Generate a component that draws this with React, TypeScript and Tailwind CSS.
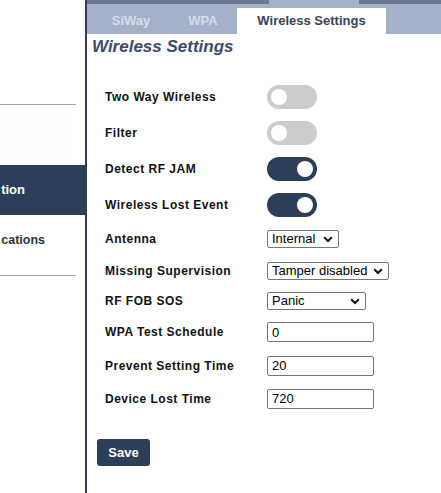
import React from "react";

function Toggle({ on }: { on: boolean }) {
  return (
    <div
      className={
        on
          ? "flex h-[24px] w-[50px] items-center justify-end rounded-full bg-[#2d3e58] px-[4px]"
          : "flex h-[24px] w-[50px] items-center justify-start rounded-full bg-[#cccccc] px-[4px]"
      }
    >
      <div className="h-[16px] w-[16px] rounded-full bg-white" />
    </div>
  );
}

function Select({ value, options, width }: { value: string; options: string[]; width: string }) {
  return (
    <div className={"relative h-[18px] " + width}>
      <select
        defaultValue={value}
        className="block h-[18px] w-full appearance-none rounded-[2px] border border-[#767676] bg-white pl-[4px] pr-[16px] text-[13px] leading-[16px] text-black outline-none"
      >
        {options.map((o) => (
          <option key={o}>{o}</option>
        ))}
      </select>
      <svg
        className="pointer-events-none absolute right-[6px] top-[6px]"
        width="10"
        height="7"
        viewBox="0 0 10 7"
      >
        <path d="M1.2 1.2 L5 5 L8.8 1.2" fill="none" stroke="#111" strokeWidth="2" />
      </svg>
    </div>
  );
}

function TextInput({ value }: { value: string }) {
  return (
    <input
      defaultValue={value}
      className="block h-[20px] w-[107px] rounded-[2px] border border-[#767676] bg-white pl-[4px] text-[13px] text-black outline-none"
    />
  );
}

const labelCls = "w-[162px] shrink-0 text-[12px] font-bold tracking-[0.5px] text-[#111]";

export default function App() {
  return (
    <div className="flex h-[493px] w-[441px] overflow-hidden bg-white font-['Liberation_Sans',Arial,sans-serif]">
      <aside className="flex w-[87px] shrink-0 flex-col border-r-2 border-[#2d3e58] bg-white">
        <div className="h-[104px]" />
        <div className="h-px w-[76px] bg-[#a3a3a3]" />
        <div className="mt-[10px] h-[40px] w-[72px] bg-[#fefefe]" />
        <div className="h-[10px]" />
        <div className="flex h-[50px] items-center bg-[#2d3e58]">
          <div className="flex w-[25px] justify-end whitespace-nowrap text-[13px] font-bold text-white">
            tion
          </div>
        </div>
        <div className="flex h-[50px] items-center">
          <div className="flex w-[45px] justify-end whitespace-nowrap text-[12.5px] font-bold text-[#333]">
            cations
          </div>
        </div>
        <div className="h-[10px]" />
        <div className="h-px w-[76px] bg-[#a3a3a3]" />
      </aside>

      <main className="flex min-w-0 flex-1 flex-col">
        <div className="flex h-[4px]">
          <div className="w-[182px] bg-[#6c7b93]" />
          <div className="w-[90px] bg-[#a3b2c9]" />
          <div className="flex-1 bg-[#6c7b93]" />
        </div>
        <div className="flex h-[30px] items-end bg-[#a3b2c9] pl-[6px]">
          <div className="flex h-[26px] w-[76px] items-center justify-center text-[13px] font-bold text-[#d6dde9]">
            SiWay
          </div>
          <div className="flex h-[26px] w-[68px] items-center justify-center text-[13px] font-bold text-[#d6dde9]">
            WPA
          </div>
          <div className="flex h-[26px] w-[149px] items-center justify-center bg-white text-[13px] font-bold text-[#394357]">
            Wireless Settings
          </div>
        </div>

        <h1 className="mt-[3px] pl-[5px] text-[17px] font-bold italic leading-[20px] text-[#3d4a6b]">
          Wireless Settings
        </h1>

        <div className="mt-[22px] flex flex-col pl-[18px]">
          <div className="flex h-[36px] items-center">
            <div className={labelCls}>Two Way Wireless</div>
            <Toggle on={false} />
          </div>
          <div className="flex h-[36px] items-center">
            <div className={labelCls}>Filter</div>
            <Toggle on={false} />
          </div>
          <div className="flex h-[36px] items-center">
            <div className={labelCls}>Detect RF JAM</div>
            <Toggle on={true} />
          </div>
          <div className="flex h-[36px] items-center">
            <div className={labelCls}>Wireless Lost Event</div>
            <Toggle on={true} />
          </div>
          <div className="flex h-[31px] items-center">
            <div className={labelCls}>Antenna</div>
            <Select value="Internal" options={["Internal", "External"]} width="w-[72px]" />
          </div>
          <div className="flex h-[33px] items-center">
            <div className={labelCls}>Missing Supervision</div>
            <Select
              value="Tamper disabled"
              options={["Tamper disabled", "Tamper enabled"]}
              width="w-[122px]"
            />
          </div>
          <div className="flex h-[28px] items-center">
            <div className={labelCls}>RF FOB SOS</div>
            <Select value="Panic" options={["Panic", "Fire", "Medical"]} width="w-[99px]" />
          </div>
          <div className="flex h-[34px] items-center">
            <div className={labelCls}>WPA Test Schedule</div>
            <TextInput value="0" />
          </div>
          <div className="flex h-[33px] items-center">
            <div className={labelCls}>Prevent Setting Time</div>
            <TextInput value="20" />
          </div>
          <div className="flex h-[33px] items-center">
            <div className={labelCls}>Device Lost Time</div>
            <TextInput value="720" />
          </div>
        </div>

        <div className="ml-[10px] mt-[24px]">
          <button className="flex h-[27px] w-[53px] items-center justify-center rounded-[3px] bg-[#2d3e58] text-[13px] font-bold text-white">
            Save
          </button>
        </div>
      </main>
    </div>
  );
}
